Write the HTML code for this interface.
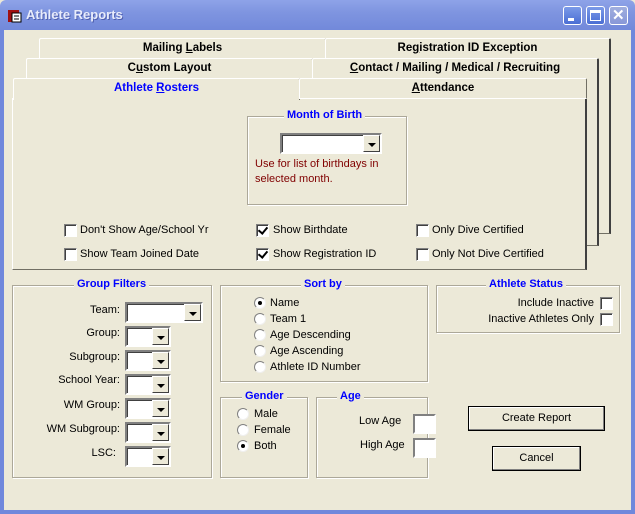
<!DOCTYPE html>
<html><head><meta charset="utf-8"><style>
*{margin:0;padding:0;box-sizing:border-box}
body{width:635px;height:514px;overflow:hidden;font-family:Tahoma,"Liberation Sans",sans-serif;font-size:11px;color:#000;background:#ece9d8;position:relative}
.a{position:absolute}
#title{left:0;top:0;width:635px;height:30px;background:linear-gradient(#8ea3e8,#7f95e0 40%,#7289da);border-radius:6px 6px 0 0}
#title .t{left:26px;top:7px;color:#e8ecfb;font-weight:bold;font-size:13px;text-shadow:1px 1px #5060b0}
.wb{top:6px;width:19px;height:19px;border:1px solid #fff;border-radius:3px;background:linear-gradient(#7b9ae8,#4a6ed4)}
#lb,#rb{top:30px;width:4px;height:484px;background:#7088dc}
#bb{left:0;top:510px;width:635px;height:4px;background:#7088dc}
.tab{height:21px;border:1px solid #fff;border-right:1px solid #716f64;border-bottom:none;background:#ece9d8;text-align:center;font-weight:bold;font-size:11.5px;line-height:19px;border-radius:2px 2px 0 0}
.pg{border:1px solid #fff;border-right:2px solid #404040;border-bottom:1px solid #716f64;background:#ece9d8}
.gb{border:1px solid #aca899;box-shadow:1px 1px 0 #fff inset,1px 1px 0 #fff}
.gt{color:#0000ff;font-weight:bold;background:#ece9d8;padding:0 3px;top:-8px;white-space:nowrap}
.cb{width:13px;height:13px;border:1px solid;border-color:#808080 #fff #fff #808080;background:#fff;box-shadow:inset 1px 1px #404040}
.ck::after{content:"";position:absolute;left:3px;top:0px;width:4px;height:7px;border:solid #000;border-width:0 2px 2px 0;transform:rotate(40deg)}
.rd{width:12px;height:12px;border-radius:50%;background:#fff;border:1px solid;border-color:#808080 #f0f0f0 #f0f0f0 #808080}
.rd.on::after{content:"";position:absolute;left:3px;top:3px;width:4px;height:4px;border-radius:50%;background:#000}
.cmb{height:21px;background:#fff;border:2px solid;border-color:#808080 #fff #fff #808080;box-shadow:inset 1px 1px #404040}
.cmb i{position:absolute;right:0;top:0;width:17px;height:17px;background:#ece9d8;border:1px solid;border-color:#fff #404040 #404040 #fff}
.cmb i::after{content:"";position:absolute;left:4px;top:7px;border:4px solid transparent;border-top:4px solid #000;border-bottom:0}
.lbl{text-align:right;width:110px}
.btn{border:1px solid #000;background:#ece9d8;box-shadow:inset -1px -1px #808080,inset 1px 1px #fff;text-align:center;line-height:22px;font-size:11px}
.tb{width:23px;height:20px;background:#fff;border:2px solid;border-color:#808080 #fff #fff #808080}
u{text-decoration:underline}
</style></head><body>
<div id="title" class="a">
<svg class="a" style="left:6px;top:8px" width="16" height="16"><rect x="2" y="2" width="11" height="12" fill="#a01010"/><rect x="6" y="5" width="9" height="9" fill="#fff" stroke="#000"/><line x1="8" y1="8" x2="13" y2="8" stroke="#000"/><line x1="8" y1="11" x2="13" y2="11" stroke="#000"/></svg>
<div class="a t">Athlete Reports</div>
<div class="a wb" style="left:563px"><div class="a" style="left:4px;top:11px;width:6px;height:3px;background:#fff"></div></div>
<div class="a wb" style="left:586px"><div class="a" style="left:3px;top:3px;width:11px;height:11px;border:1px solid #fff;border-top-width:3px"></div></div>
<div class="a wb" style="left:609px;background:linear-gradient(#a0aede,#8898d8)"><div class="a" style="left:2px;top:-1px;color:#fff;font-weight:bold;font-size:15px">✕</div></div>
</div>
<div id="lb" class="a" style="left:0"></div><div id="rb" class="a" style="left:631px"></div><div id="bb" class="a"></div>

<div class="a pg" style="left:38px;top:58px;width:573px;height:176px"></div>
<div class="a tab" style="left:39px;top:38px;width:287px">Mailing <u>L</u>abels</div>
<div class="a tab" style="left:325px;top:38px;width:286px;border-right:2px solid #404040">Re<u>g</u>istration ID Exception</div>
<div class="a pg" style="left:25px;top:78px;width:574px;height:168px"></div>
<div class="a tab" style="left:26px;top:58px;width:287px">C<u>u</u>stom Layout</div>
<div class="a tab" style="left:312px;top:58px;width:287px;border-right:2px solid #404040"><u>C</u>ontact / Mailing / Medical / Recruiting</div>
<div class="a pg" style="left:12px;top:98px;width:575px;height:172px"></div>
<div class="a tab" style="left:13px;top:78px;width:287px;height:22px;color:#0000ff;border-bottom:none">Athlete <u>R</u>osters</div>
<div class="a tab" style="left:299px;top:78px;width:288px;border-bottom:1px solid #fff"><u>A</u>ttendance</div>

<div class="a gb" style="left:247px;top:116px;width:160px;height:89px"><div class="a gt" style="left:36px">Month of Birth</div></div>
<div class="a cmb" style="left:280px;top:133px;width:102px"><i></i></div>
<div class="a" style="left:255px;top:157px;color:#800000;line-height:15px">Use for list of birthdays in<br>selected month.</div>

<div class="a cb" style="left:64px;top:224px"></div><div class="a" style="left:80px;top:224px">Don't Show Age/School Yr</div>
<div class="a cb ck" style="left:256px;top:224px"></div><div class="a" style="left:273px;top:224px">Show Birthdate</div>
<div class="a cb" style="left:416px;top:224px"></div><div class="a" style="left:432px;top:224px">Only Dive Certified</div>
<div class="a cb" style="left:64px;top:248px"></div><div class="a" style="left:80px;top:248px">Show Team Joined Date</div>
<div class="a cb ck" style="left:256px;top:248px"></div><div class="a" style="left:273px;top:248px">Show Registration ID</div>
<div class="a cb" style="left:416px;top:248px"></div><div class="a" style="left:432px;top:248px">Only Not Dive Certified</div>

<div class="a gb" style="left:12px;top:285px;width:200px;height:193px"><div class="a gt" style="left:61px">Group Filters</div></div>
<div class="a lbl" style="left:10px;top:304px">Team:</div><div class="a cmb" style="left:125px;top:302px;width:78px"><i></i></div>
<div class="a lbl" style="left:10px;top:327px">Group:</div><div class="a cmb" style="left:125px;top:326px;width:46px"><i></i></div>
<div class="a lbl" style="left:10px;top:351px">Subgroup:</div><div class="a cmb" style="left:125px;top:350px;width:46px"><i></i></div>
<div class="a lbl" style="left:10px;top:374px">School Year:</div><div class="a cmb" style="left:125px;top:374px;width:46px"><i></i></div>
<div class="a lbl" style="left:10px;top:399px">WM Group:</div><div class="a cmb" style="left:125px;top:398px;width:46px"><i></i></div>
<div class="a lbl" style="left:10px;top:423px">WM Subgroup:</div><div class="a cmb" style="left:125px;top:422px;width:46px"><i></i></div>
<div class="a lbl" style="left:6px;top:447px">LSC:</div><div class="a cmb" style="left:125px;top:446px;width:46px"><i></i></div>

<div class="a gb" style="left:220px;top:285px;width:208px;height:97px"><div class="a gt" style="left:80px">Sort by</div></div>
<div class="a rd on" style="left:254px;top:297px"></div><div class="a" style="left:270px;top:297px">Name</div>
<div class="a rd" style="left:254px;top:313px"></div><div class="a" style="left:270px;top:313px">Team 1</div>
<div class="a rd" style="left:254px;top:329px"></div><div class="a" style="left:270px;top:329px">Age Descending</div>
<div class="a rd" style="left:254px;top:345px"></div><div class="a" style="left:270px;top:345px">Age Ascending</div>
<div class="a rd" style="left:254px;top:361px"></div><div class="a" style="left:270px;top:361px">Athlete ID Number</div>

<div class="a gb" style="left:220px;top:397px;width:88px;height:81px"><div class="a gt" style="left:21px">Gender</div></div>
<div class="a rd" style="left:237px;top:408px"></div><div class="a" style="left:254px;top:408px">Male</div>
<div class="a rd" style="left:237px;top:424px"></div><div class="a" style="left:254px;top:424px">Female</div>
<div class="a rd on" style="left:237px;top:440px"></div><div class="a" style="left:254px;top:440px">Both</div>

<div class="a gb" style="left:316px;top:397px;width:112px;height:81px"><div class="a gt" style="left:20px">Age</div></div>
<div class="a" style="left:359px;top:415px">Low Age</div><div class="a tb" style="left:413px;top:414px"></div>
<div class="a" style="left:360px;top:439px">High Age</div><div class="a tb" style="left:413px;top:438px"></div>

<div class="a gb" style="left:436px;top:285px;width:184px;height:48px"><div class="a gt" style="left:49px">Athlete Status</div></div>
<div class="a" style="left:450px;top:297px;width:144px;text-align:right">Include Inactive</div><div class="a cb" style="left:600px;top:297px"></div>
<div class="a" style="left:450px;top:313px;width:144px;text-align:right">Inactive Athletes Only</div><div class="a cb" style="left:600px;top:313px"></div>

<div class="a btn" style="left:468px;top:406px;width:137px;height:25px">Create Report</div>
<div class="a btn" style="left:492px;top:446px;width:89px;height:25px">Cancel</div>
</body></html>
